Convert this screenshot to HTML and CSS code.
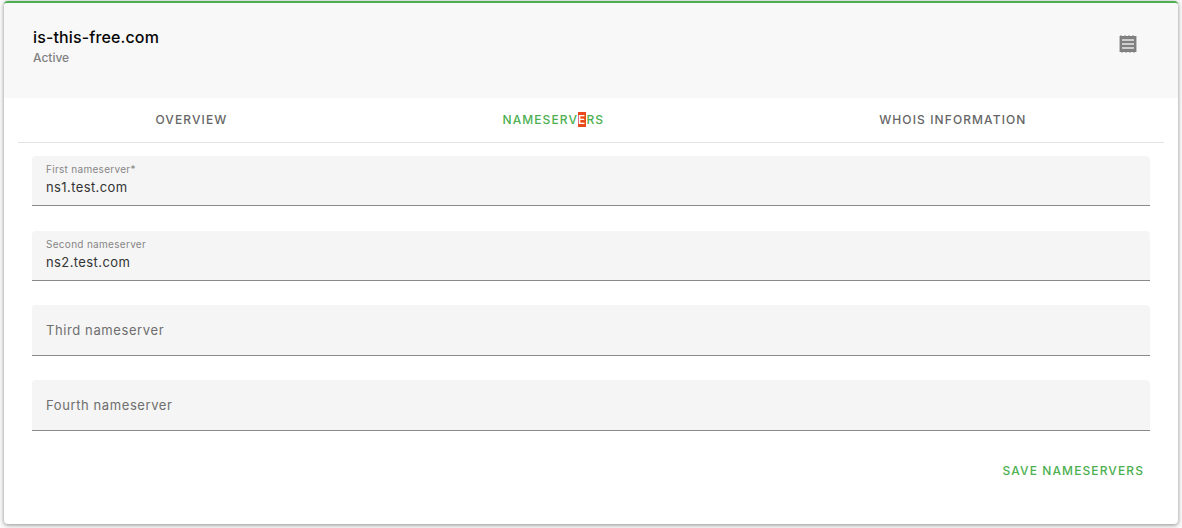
FILE: index.html
```html
<!DOCTYPE html>
<html lang="en">
<head>
  <meta charset="UTF-8" />
  <title>is-this-free.com</title>
  <link rel="stylesheet" href="styles.css">
</head>
<body>

  <div class="card">
    <header class="card-head">
      <div>
        <h1>is-this-free.com</h1>
        <p class="status">Active</p>
      </div>
      <svg class="receipt" width="18" height="18" viewBox="0 0 18 18" aria-hidden="true">
        <path class="rim" d="M0 1h18v16H0zM1 0h2v1H1zM5 0h2v1H5zM9 0h2v1H9zM13 0h2v1h-2zM2 17h2v1H2zM6 17h2v1H6zM10 17h2v1h-2zM14 17h2v1h-2z" />
        <path d="M1 1h16v16H1z" />
        <path class="lines" d="M3 4.2h12v1.6H3zM3 8.2h12v1.6H3zM3 12.2h12v1.6H3z" />
      </svg>
    </header>

    <nav class="tabs">
      <a class="tab">Overview</a>
      <a class="tab active">Nameserv<span class="hit">e</span>rs</a>
      <a class="tab">Whois information</a>
    </nav>

    <form class="fields">
      <div class="field filled">
        <label>First nameserver*</label>
        <div class="value">ns1.test.com</div>
      </div>
      <div class="field filled">
        <label>Second nameserver</label>
        <div class="value">ns2.test.com</div>
      </div>
      <div class="field empty">
        <label>Third nameserver</label>
      </div>
      <div class="field empty">
        <label>Fourth nameserver</label>
      </div>
      <div class="actions">
        <button type="button" class="save">Save nameservers</button>
      </div>
    </form>
  </div>

</body>
</html>
```

FILE: styles.css
```css
body {
  margin: 0;
  padding: 1px 4px 4px;
  background: #fafafa;
  font-family: Inter, 'Noto Sans', sans-serif;
}

.card {
  height: 523px;
  box-sizing: border-box;
  background: #fff;
  border-top: 2px solid #4caf50;
  border-radius: 4px;
  box-shadow: 0 1px 4px rgba(0,0,0,0.45);
  overflow: hidden;
}

.card-head {
  display: flex;
  justify-content: space-between;
  height: 95px;
  box-sizing: border-box;
  padding: 24px 41px 0 29px;
  background: #f8f8f8;
}

h1 {
  margin: 0;
  font-size: 16px;
  line-height: 20px;
  font-weight: 500;
  letter-spacing: 0.13px;
  color: #050505;
}

.status {
  margin: 3px 0 0;
  font-size: 12px;
  line-height: 16px;
  font-weight: 500;
  color: #808080;
}

.receipt {
  margin-top: 8px;
  fill: #808080;
}

.receipt .rim {
  fill: #c4c4c4;
}

.receipt .lines {
  fill: #e8e8e8;
}

.tabs {
  display: flex;
  margin: 0 14px;
  height: 45px;
  box-sizing: border-box;
  border-bottom: 1px solid #e2e2e2;
}

.tab {
  flex: 1 1 auto;
  text-align: center;
  font-size: 12px;
  line-height: 43px;
  font-weight: 500;
  letter-spacing: 1.1px;
  text-transform: uppercase;
  color: #666;
}

.tab.active {
  color: #4caf50;
}

.hit {
  background: #e8491d;
  color: #fff;
}

.fields {
  padding: 13px 28px 0;
}

.field {
  box-sizing: border-box;
  height: 50px;
  margin-bottom: 24.6px;
  padding: 0 14px;
  background: #f5f5f5;
  border-bottom: 1px solid #8a8a8a;
  border-radius: 4px 4px 0 0;
  font-size: 13px;
  letter-spacing: 0.6px;
  color: #6e6e6e;
}

.field.empty {
  height: 51px;
  margin-bottom: 24px;
  line-height: 50px;
}

.field.filled {
  padding-top: 7px;
}

.field.filled label {
  display: block;
  font-size: 10px;
  line-height: 12px;
  letter-spacing: 0.3px;
  color: #858585;
}

.value {
  margin-top: 4px;
  line-height: 17px;
  letter-spacing: 0.4px;
  color: #333;
}

.actions {
  display: flex;
  justify-content: flex-end;
}

.save {
  padding: 8px 6px 8px 8px;
  border: none;
  background: none;
  font-family: inherit;
  font-size: 12px;
  font-weight: 500;
  letter-spacing: 1.1px;
  text-transform: uppercase;
  color: #4caf50;
}
```
